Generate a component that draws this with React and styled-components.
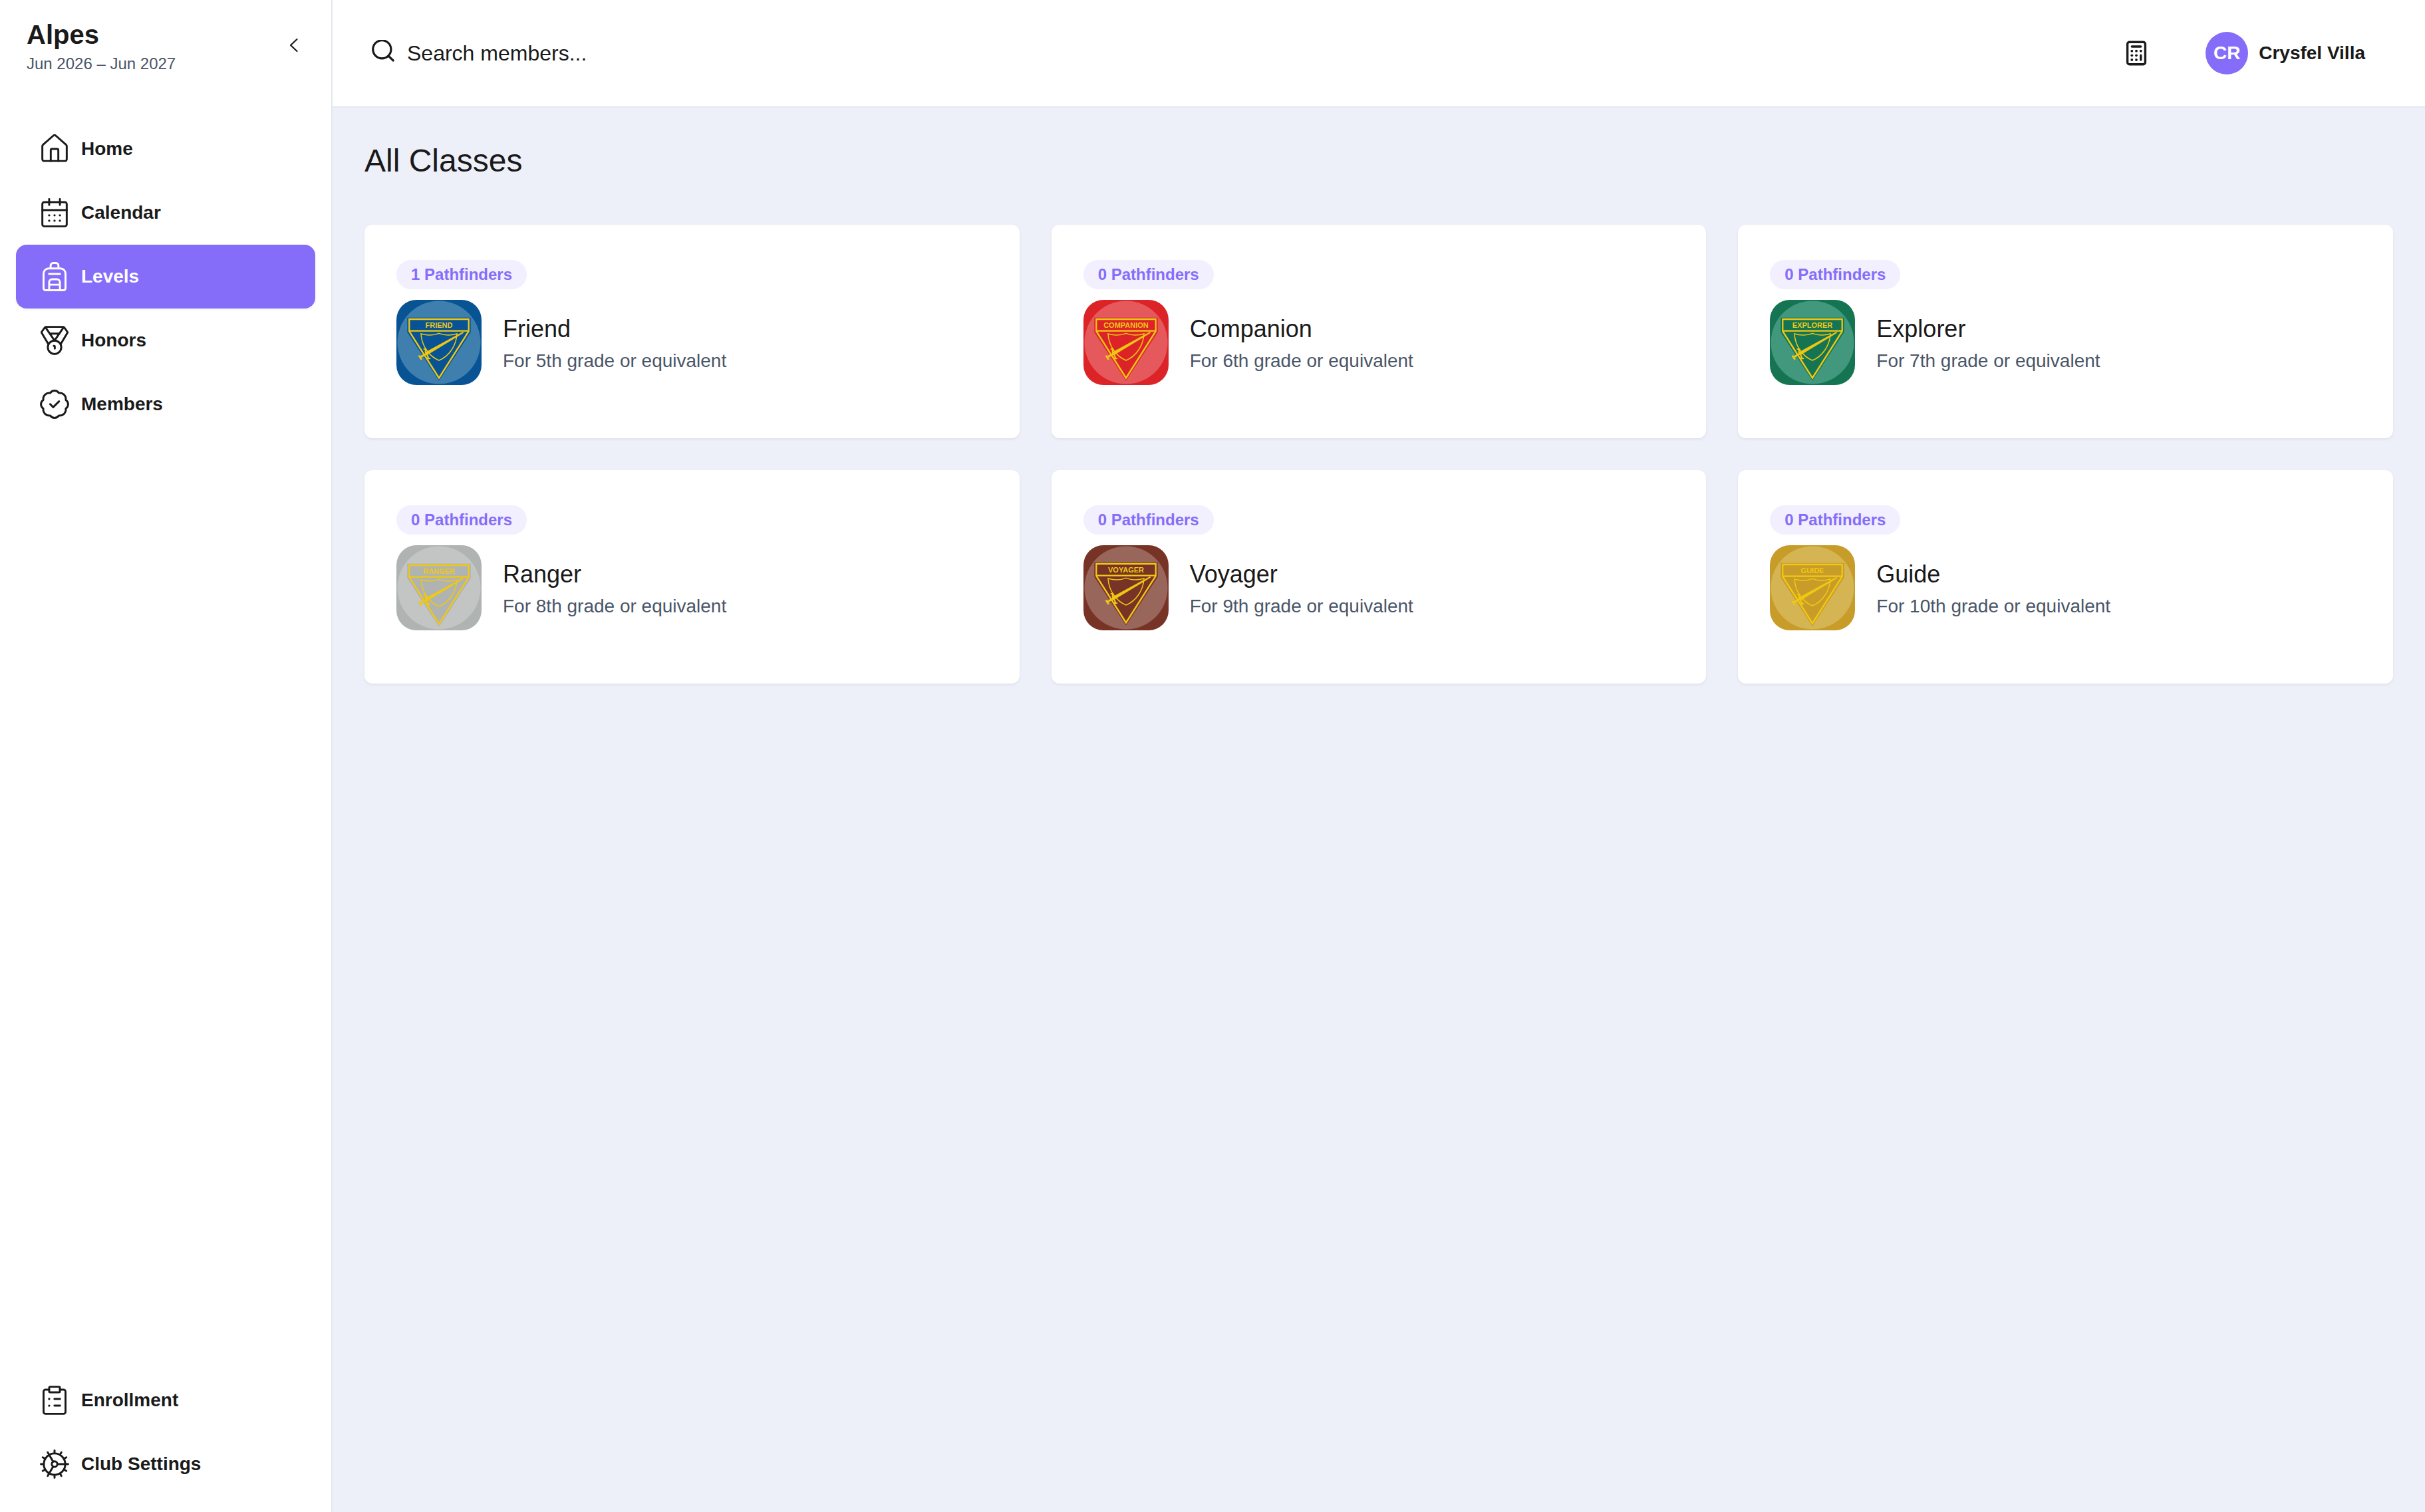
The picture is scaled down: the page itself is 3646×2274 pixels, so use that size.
import React from "react";
import styled, { createGlobalStyle, css } from "styled-components";

const color = {
  ink: "#1a1a1a",
  muted: "#4a5568",
  accent: "#856dfa",
  accentSoft: "#f2effe",
  line: "#e2e8f0",
  page: "#edf0f9",
  gold: "#f0c814",
};

const GlobalStyle = createGlobalStyle`
  *, *::before, *::after { box-sizing: border-box; }
  body {
    margin: 0;
    background: ${color.page};
    color: ${color.ink};
    font-family: "Liberation Sans", Arial, sans-serif;
    font-size: 28px;
  }
  button, input { font: inherit; color: inherit; }
`;

const Layout = styled.div`
  display: flex;
  min-height: 100vh;
`;

const Sidebar = styled.aside`
  display: flex;
  flex-direction: column;
  flex: 0 0 500px;
  padding-bottom: 24px;
  background: #fff;
  border-right: 2px solid ${color.line};
`;

const ClubHeader = styled.div`
  display: flex;
  align-items: flex-start;
  justify-content: space-between;
  padding: 28px 32px 0 40px;
  margin-bottom: 60px;
`;

const ClubName = styled.div`
  font-size: 40px;
  line-height: 48px;
  font-weight: 700;
`;

const ClubPeriod = styled.div`
  font-size: 24px;
  line-height: 40px;
  color: ${color.muted};
`;

const plainButton = css`
  display: flex;
  align-items: center;
  border: 0;
  background: none;
  cursor: pointer;
`;

const CollapseButton = styled.button`
  ${plainButton}
  justify-content: center;
  width: 48px;
  height: 80px;
  padding: 0;
`;

const Nav = styled.nav`
  display: flex;
  flex-direction: column;
  padding: 0 24px;
  margin-top: ${(p) => (p.$bottom ? "auto" : "0")};
`;

const NavLink = styled.a`
  display: flex;
  align-items: center;
  gap: 18px;
  height: 96px;
  padding: 0 36px;
  border-radius: 16px;
  font-weight: 700;
  text-decoration: none;
  color: ${(p) => (p.$active ? "#fff" : color.ink)};
  background: ${(p) => (p.$active ? color.accent : "transparent")};
  box-shadow: ${(p) => (p.$active ? "0 2px 4px rgba(0, 0, 0, 0.05)" : "none")};
`;

const LineIcon = styled.svg`
  flex: none;
  width: ${(p) => p.$size}px;
  height: ${(p) => p.$size}px;
  fill: none;
  stroke: currentColor;
  stroke-linecap: round;
  stroke-linejoin: round;
`;

const Content = styled.div`
  display: flex;
  flex-direction: column;
  flex: 1;
  min-width: 0;
`;

const TopBar = styled.header`
  display: flex;
  align-items: center;
  gap: 48px;
  height: 162px;
  padding: 0 72px 0 56px;
  background: #fff;
  border-bottom: 2px solid ${color.line};
`;

const SearchBox = styled.label`
  display: flex;
  align-items: center;
  flex: 1;
  gap: 16px;
`;

const SearchInput = styled.input`
  flex: 1;
  min-width: 0;
  height: 64px;
  padding: 0;
  border: 0;
  outline: 0;
  background: none;
  font-size: 32px;
  &::placeholder {
    color: ${color.ink};
    opacity: 1;
  }
`;

const IconButton = styled.button`
  ${plainButton}
  padding: 0 18px;
`;

const UserButton = styled.button`
  ${plainButton}
  gap: 16px;
  padding: 0 18px;
  font-weight: 700;
`;

const Avatar = styled.span`
  display: grid;
  place-items: center;
  width: 64px;
  height: 64px;
  border-radius: 50%;
  background: ${color.accent};
  color: #fff;
`;

const Main = styled.main`
  padding: 48px;
`;

const PageTitle = styled.h1`
  margin: 0 0 64px;
  font-size: 48px;
  line-height: 64px;
  font-weight: 400;
`;

const ClassGrid = styled.ul`
  display: grid;
  grid-template-columns: repeat(3, minmax(0, 1fr));
  gap: 48px;
  margin: 0;
  padding: 0;
  list-style: none;
`;

const ClassCard = styled.li`
  display: flex;
  flex-direction: column;
  align-items: flex-start;
  gap: 16px;
  padding: 53px 48px 80px;
  border-radius: 12px;
  background: #fff;
  box-shadow: 0 2px 4px rgba(0, 0, 0, 0.06);
`;

const CountPill = styled.span`
  padding: 0 22px;
  border-radius: 22px;
  background: ${color.accentSoft};
  color: ${color.accent};
  font-size: 24px;
  line-height: 44px;
  font-weight: 700;
`;

const ClassInfo = styled.div`
  display: flex;
  align-items: center;
  gap: 32px;
`;

const ClassText = styled.div`
  padding-top: 2px;
`;

const ClassName = styled.h2`
  margin: 0;
  font-size: 36px;
  line-height: 54px;
  font-weight: 400;
`;

const ClassNote = styled.p`
  margin: 0;
  line-height: 42px;
  color: ${color.muted};
`;

const Emblem = styled.svg`
  flex: none;
  width: 128px;
  height: 128px;
  border-radius: 30px;
`;

const EmblemLabel = styled.text`
  font-size: 11px;
  font-weight: 700;
  text-anchor: middle;
  fill: ${color.gold};
`;

const Dots = ({ points, r = 0.9 }) =>
  points.map(([x, y]) => (
    <circle key={`${x}-${y}`} cx={x} cy={y} r={r} fill="currentColor" stroke="none" />
  ));

const icons = {
  home: (
    <>
      <path d="M2 9.7v10.7A1.5 1.5 0 0 0 3.5 21.9h17a1.5 1.5 0 0 0 1.5-1.5V9.7a1.5 1.5 0 0 0-.55-1.16L13 1.1a1.5 1.5 0 0 0-2 0L2.55 8.54A1.5 1.5 0 0 0 2 9.7z" />
      <path d="M8.9 21.9V13a1 1 0 0 1 1-1h4.2a1 1 0 0 1 1 1v8.9" />
    </>
  ),
  calendar: (
    <>
      <rect x="2" y="3.3" width="20" height="19.8" rx="1.6" />
      <path d="M2 9.8h20M7.6.8v4.8M16.4.8v4.8" />
      <Dots points={[[7.6, 14.1], [12, 14.1], [16.4, 14.1], [7.6, 18.5], [12, 18.5], [16.4, 18.5]]} />
    </>
  ),
  levels: (
    <>
      <path d="M8.8 5.2V2.9A2.1 2.1 0 0 1 10.9.8h2.2a2.1 2.1 0 0 1 2.1 2.1v2.3" />
      <path d="M3 9.5a4.2 4.2 0 0 1 4.2-4.2h9.6A4.2 4.2 0 0 1 21 9.5v12.1a1.6 1.6 0 0 1-1.6 1.6H4.6A1.6 1.6 0 0 1 3 21.6z" />
      <path d="M7.5 9.8h9M7.6 23.2v-6.6a2.4 2.4 0 0 1 2.4-2.4h4a2.4 2.4 0 0 1 2.4 2.4v6.6M7.6 18.6h8.8" />
    </>
  ),
  honors: (
    <>
      <circle cx="12" cy="17.6" r="5.5" />
      <path d="M6.6 14.4 1.5 5.9a1 1 0 0 1 0-1L4 1.4a1.2 1.2 0 0 1 1-.5h14a1.2 1.2 0 0 1 1 .5l2.5 3.5a1 1 0 0 1 0 1l-5.1 8.5" />
      <path d="M4.5 1.2 12 12.1l7.5-10.9M7.9 6.4h8.2" />
      <path d="M11.4 16.5h.3a.5.5 0 0 1 .5.5v1.7" />
    </>
  ),
  members: (
    <>
      <path d="M8.4 2.8a4.3 4.3 0 0 1 7.2 0A4.9 4.9 0 0 1 21.2 8.4a4.3 4.3 0 0 1 0 7.2A4.9 4.9 0 0 1 15.6 21.2a4.3 4.3 0 0 1-7.2 0A4.9 4.9 0 0 1 2.8 15.6a4.3 4.3 0 0 1 0-7.2A4.9 4.9 0 0 1 8.4 2.8z" />
      <path d="m8.4 11.9 2.5 2.5 4.8-4.8" />
    </>
  ),
  enrollment: (
    <>
      <path d="M7.6 3.3h-3A1.6 1.6 0 0 0 3 4.9v16.6a1.6 1.6 0 0 0 1.6 1.6h14.8a1.6 1.6 0 0 0 1.6-1.6V4.9a1.6 1.6 0 0 0-1.6-1.6h-3" />
      <rect x="7.6" y=".9" width="8.8" height="4.6" rx=".7" />
      <path d="M11.9 10.9h4.6M11.9 16.4h4.6" />
      <Dots points={[[7.6, 10.9], [7.6, 16.4]]} />
    </>
  ),
  settings: (
    <>
      <circle cx="12" cy="12" r="8.8" />
      <circle cx="12" cy="12" r="2.3" />
      {[0, 30, 60, 90, 120, 150, 180, 210, 240, 270, 300, 330].map((a) => (
        <path key={a} d="M20.8 12h2.4" transform={`rotate(${a} 12 12)`} />
      ))}
      {[0, 120, 240].map((a) => (
        <path key={a} d="M14.3 12h6.5" transform={`rotate(${a} 12 12)`} />
      ))}
    </>
  ),
};

const mainNav = [
  { icon: "home", label: "Home" },
  { icon: "calendar", label: "Calendar" },
  { icon: "levels", label: "Levels", active: true },
  { icon: "honors", label: "Honors" },
  { icon: "members", label: "Members" },
];

const bottomNav = [
  { icon: "enrollment", label: "Enrollment" },
  { icon: "settings", label: "Club Settings" },
];

const classes = [
  { name: "Friend", grade: "5th", count: 1, base: "#085394", disc: "#3e7fae", shift: 0 },
  { name: "Companion", grade: "6th", count: 0, base: "#dc2428", disc: "#e5595c", shift: 0 },
  { name: "Explorer", grade: "7th", count: 0, base: "#157553", disc: "#41987d", shift: 0 },
  { name: "Ranger", grade: "8th", count: 0, base: "#afb3b2", disc: "#c3c5c4", shift: 1 },
  { name: "Voyager", grade: "9th", count: 0, base: "#773325", disc: "#99665b", shift: -1 },
  { name: "Guide", grade: "10th", count: 0, base: "#c89c28", disc: "#d4b453", shift: 0 },
];

function NavList({ items, bottom, label }) {
  return (
    <Nav $bottom={bottom} aria-label={label}>
      {items.map((item) => (
        <NavLink
          key={item.label}
          href={`#${item.icon}`}
          $active={item.active}
          aria-current={item.active ? "page" : undefined}
        >
          <LineIcon $size={44} viewBox="0 0 24 24" strokeWidth="1.6" aria-hidden="true">
            {icons[item.icon]}
          </LineIcon>
          {item.label}
        </NavLink>
      ))}
    </Nav>
  );
}

function ClassEmblem({ name, base, disc, shift }) {
  return (
    <Emblem viewBox="0 0 128 128" aria-hidden="true">
      <rect width="128" height="128" fill={base} />
      <circle cx="64" cy="64" r="62.5" fill={disc} />
      <g transform={`translate(0 ${shift})`} fill="none" stroke={color.gold}>
        <path d="M16.3 26.8h95.4v21.8L64 121.5 16.3 48.6z" fill={base} stroke="none" />
        <path d="M19.3 29h89.4v17.7H19.3z" strokeWidth="2.3" />
        <path d="M19.3 47.2 64 117.4l44.7-70.2" strokeWidth="2.4" />
        <path
          d="M37 51c9 2.8 19 2.6 27-.6 8 3.2 18 3.4 27 .6C90 69 79 85 64 91 49 85 38 69 37 51z"
          strokeWidth="1.5"
        />
        <path d="M101 49.3 45.5 83 43.2 79.2 99.8 48.4z" fill={color.gold} strokeWidth=".8" />
        <path d="M45 81 36 86" strokeWidth="3" />
        <path d="M34.3 84.5 37.3 89" strokeWidth="2.6" strokeLinecap="round" />
        <path
          d="M41.6 74h2.8l-.8 4 4.2 8-1 2.2h3.4"
          strokeWidth="2.2"
          strokeLinecap="round"
          strokeLinejoin="round"
        />
      </g>
      <EmblemLabel x="64" y={42 + shift}>
        {name.toUpperCase()}
      </EmblemLabel>
    </Emblem>
  );
}

export default function App() {
  return (
    <Layout>
      <GlobalStyle />
      <Sidebar>
        <ClubHeader>
          <div>
            <ClubName>Alpes</ClubName>
            <ClubPeriod>Jun 2026 – Jun 2027</ClubPeriod>
          </div>
          <CollapseButton type="button" aria-label="Collapse sidebar">
            <LineIcon $size={24} viewBox="0 0 24 24" strokeWidth="2.2" aria-hidden="true">
              <path d="M16.500 3 7 12l9.500 9" />
            </LineIcon>
          </CollapseButton>
        </ClubHeader>
        <NavList items={mainNav} label="Main" />
        <NavList items={bottomNav} label="Club" bottom />
      </Sidebar>

      <Content>
        <TopBar>
          <SearchBox>
            <LineIcon $size={40} viewBox="0 0 40 40" strokeWidth="3.2" aria-hidden="true">
              <circle cx="18.3" cy="14.3" r="13.6" />
              <path d="m28 24.2 7.2 6.8" />
            </LineIcon>
            <SearchInput type="search" aria-label="Search members" placeholder="Search members..." />
          </SearchBox>
          <IconButton type="button" aria-label="Calculator">
            <LineIcon $size={40} viewBox="0 0 40 40" strokeWidth="3.4" aria-hidden="true">
              <rect x="6.6" y="3.2" width="26.8" height="33.6" rx="3" />
              <path d="M13.3 10h13.4M26.7 23.3V30" />
              <Dots
                r={1.9}
                points={[
                  [13.3, 16.7], [20, 16.7], [26.7, 16.7],
                  [13.3, 23.3], [20, 23.3],
                  [13.3, 30], [20, 30],
                ]}
              />
            </LineIcon>
          </IconButton>
          <UserButton type="button">
            <Avatar>CR</Avatar>
            Crysfel Villa
          </UserButton>
        </TopBar>

        <Main>
          <PageTitle>All Classes</PageTitle>
          <ClassGrid>
            {classes.map((item) => (
              <ClassCard key={item.name}>
                <CountPill>{item.count} Pathfinders</CountPill>
                <ClassInfo>
                  <ClassEmblem {...item} />
                  <ClassText>
                    <ClassName>{item.name}</ClassName>
                    <ClassNote>For {item.grade} grade or equivalent</ClassNote>
                  </ClassText>
                </ClassInfo>
              </ClassCard>
            ))}
          </ClassGrid>
        </Main>
      </Content>
    </Layout>
  );
}
